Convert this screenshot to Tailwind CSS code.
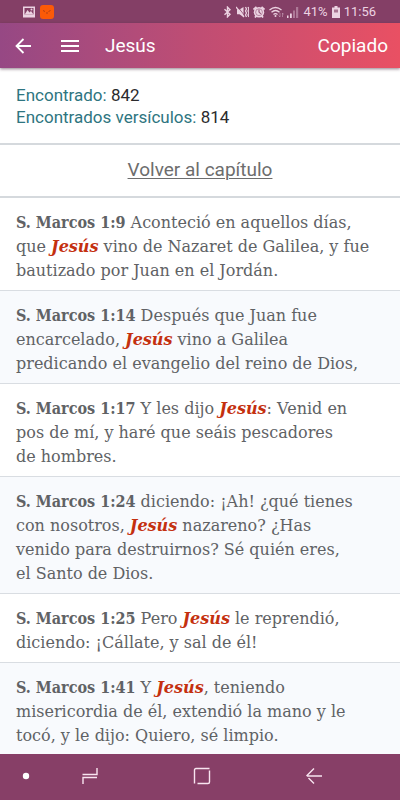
<!DOCTYPE html>
<html lang="es">
<head>
<meta charset="utf-8">
<meta name="viewport" content="width=device-width, initial-scale=1">
<title>Jesús</title>
<script src="https://cdn.jsdelivr.net/npm/@tailwindcss/browser@4"></script>
</head>
<body class="flex h-screen flex-col overflow-hidden bg-white font-[Roboto,sans-serif]">
<div class="flex h-[23px] shrink-0 items-center bg-[#843f66] pr-[24px] pl-[23px] text-[#ecd3e2]">
  <svg class="h-[12px] w-[12px]" viewBox="0 0 12 12" aria-hidden="true"><path fill="currentColor" fill-rule="evenodd" d="M0 0.500h12v11H0zM1.500 2v6.500h9V2z"/><path fill="currentColor" d="M2 8l2.500-4 2 2.500L8 5l2.500 3.500H2z"/><circle cx="8.500" cy="3.500" r="1" fill="currentColor"/></svg>
  <svg class="ml-[5px] h-[14px] w-[14px]" viewBox="0 0 14 14" aria-hidden="true"><rect width="14" height="14" rx="3" fill="#fb5a08"/><path d="M3 5.500l2 1M8.500 6.500l2-1M6 8h2" stroke="#b53f12" fill="none"/></svg>
  <div class="ml-auto flex items-center">
    <svg class="h-[12px] w-[9px]" viewBox="0 0 9 12" fill="none" stroke="currentColor" stroke-width="1.400" aria-hidden="true"><path d="M1.500 3.200l5.500 5L4.500 10.800V1.200L7 3.800l-5.500 5"/></svg>
    <svg class="ml-[4px] h-[12px] w-[13px]" viewBox="0 0 13 12" aria-hidden="true"><path d="M1 3.500h2.500L7.500 1v10L3.500 8.300H1z" fill="currentColor"/><path d="M1.500 0.500l7 9" stroke="#843f66" stroke-width="0.800"/><path d="M0 1l8 10" stroke="currentColor" stroke-width="1.300"/><path d="M9.500 1l1 2-1 2 1 2-1 2 1 2M12 1l1 2-1 2 1 2-1 2 1 2" fill="none" stroke="currentColor" stroke-width="1.300"/></svg>
    <svg class="ml-[4px] h-[12px] w-[12px]" viewBox="0 0 12 12" aria-hidden="true"><path d="M0.500 3.500L3.500 0.800M8.500 0.800l3 2.700M2 11.500l1.500-2M10 11.500l-1.500-2" stroke="currentColor" stroke-width="1.800"/><circle cx="6" cy="6.200" r="5.200" fill="currentColor"/><circle cx="6" cy="6.200" r="3.400" fill="none" stroke="#843f66" stroke-width="0.500"/><path d="M6 3.500v3l2 1" stroke="#843f66" fill="none"/></svg>
    <svg class="ml-[4px] h-[12px] w-[15px]" viewBox="0 0 15 12" fill="none" stroke="currentColor" stroke-width="1.300" aria-hidden="true"><path d="M0.500 4q6-5 12 0M2.500 6.300q4-3.500 8 0M4.500 8.500q2-1.800 4 0"/><circle cx="6.500" cy="10" r="1" fill="currentColor" stroke="none"/><path d="M11 7v4M11 11l-1.500-1.500M13.500 11V7M13.500 7l1.300 1.500" stroke-width="1" opacity=".4"/></svg>
    <svg class="ml-[3px] h-[12px] w-[12px]" viewBox="0 0 12 12" fill="currentColor" aria-hidden="true"><path d="M0 9.500h1.500V12H0zM3 7.500h1.800V12H3z"/><path opacity=".4" d="M6 4.500h2V12H6zM9 1h2.200v11H9z"/></svg>
    <span class="ml-[4px] text-[13px] leading-[16px]">41%</span>
    <svg class="ml-[4px] h-[12px] w-[8px]" viewBox="0 0 8 12" aria-hidden="true"><path d="M2.500 0h3v1.500H8V12H0V1.500h2.500z" fill="currentColor"/><path d="M2 3.500h4v3H2z" fill="#a87491"/></svg>
    <span class="ml-[4px] text-[13px] leading-[16px]">11:56</span>
  </div>
</div>
<header class="z-10 flex h-[45px] shrink-0 items-center bg-linear-to-r from-[#964884] via-[#c04d73] to-[#e95063] pr-[12px] pl-[15px] text-white shadow-[0_1px_3px_rgba(70,40,60,0.6)]">
  <button type="button" aria-label="Atrás" class="h-[18px] w-[17px]"><svg class="h-[18px] w-[17px]" viewBox="0 0 17 18" fill="none" stroke="currentColor" stroke-width="1.800" aria-hidden="true"><path d="M16 9H2M8.500 2L1.500 9l7 7"/></svg></button>
  <button type="button" aria-label="Menú" class="ml-[29px] h-[18px] w-[18px]"><svg class="h-[18px] w-[18px]" viewBox="0 0 18 18" fill="currentColor" aria-hidden="true"><path d="M0 3h18v2H0zM0 8h18v2H0zM0 13h18v2H0z"/></svg></button>
  <h1 class="ml-[26px] text-[19px] leading-[24px]">Jesús</h1>
  <button type="button" class="ml-auto text-[19px] leading-[24px]">Copiado</button>
</header>
<main class="min-h-0 flex-1 overflow-hidden text-[#606265]">
  <section class="border-b-2 border-[#d5d9dd] px-[16px] pt-[16px] pb-[15px] text-[17px] leading-[22px] text-[#2b2b2d]">
    <p><span class="text-[#2e7580]">Encontrado:</span> 842</p>
    <p><span class="text-[#2e7580]">Encontrados versículos:</span> 814</p>
  </section>
  <div class="flex justify-center border-b-2 border-[#d5d9dd] pt-[12px] pb-[14px]">
    <a href="#" class="text-[19px] leading-[25px] text-[#6d6d6d] underline decoration-1 underline-offset-2">Volver al capítulo</a>
  </div>
  <div class="font-['DejaVu_Serif',serif] text-[16px] leading-[24px] whitespace-nowrap">
    <p class="border-b border-[#d9dde2] px-[16px] pt-[13px] pb-[7px]"><b class="font-['DejaVu_Serif_Condensed','DejaVu_Serif',serif] font-bold">S. Marcos 1:9</b> Aconteció en aquellos días,<br>que <b class="text-[#c4300f] italic">Jesús</b> vino de Nazaret de Galilea, y fue<br>bautizado por Juan en el Jordán.</p>
    <p class="border-b border-[#d9dde2] bg-[#f8fafd] px-[16px] pt-[13px] pb-[7px]"><b class="font-['DejaVu_Serif_Condensed','DejaVu_Serif',serif] font-bold">S. Marcos 1:14</b> Después que Juan fue<br>encarcelado, <b class="text-[#c4300f] italic">Jesús</b> vino a Galilea<br>predicando el evangelio del reino de Dios,</p>
    <p class="border-b border-[#d9dde2] px-[16px] pt-[13px] pb-[7px]"><b class="font-['DejaVu_Serif_Condensed','DejaVu_Serif',serif] font-bold">S. Marcos 1:17</b> Y les dijo <b class="text-[#c4300f] italic">Jesús</b>: Venid en<br>pos de mí, y haré que seáis pescadores<br>de hombres.</p>
    <p class="border-b border-[#d9dde2] bg-[#f8fafd] px-[16px] pt-[13px] pb-[7px]"><b class="font-['DejaVu_Serif_Condensed','DejaVu_Serif',serif] font-bold">S. Marcos 1:24</b> diciendo: ¡Ah! ¿qué tienes<br>con nosotros, <b class="text-[#c4300f] italic">Jesús</b> nazareno? ¿Has<br>venido para destruirnos? Sé quién eres,<br>el Santo de Dios.</p>
    <p class="border-b border-[#d9dde2] px-[16px] pt-[13px] pb-[7px]"><b class="font-['DejaVu_Serif_Condensed','DejaVu_Serif',serif] font-bold">S. Marcos 1:25</b> Pero <b class="text-[#c4300f] italic">Jesús</b> le reprendió,<br>diciendo: ¡Cállate, y sal de él!</p>
    <p class="bg-[#f8fafd] px-[16px] pt-[13px] pb-[7px]"><b class="font-['DejaVu_Serif_Condensed','DejaVu_Serif',serif] font-bold">S. Marcos 1:41</b> Y <b class="text-[#c4300f] italic">Jesús</b>, teniendo<br>misericordia de él, extendió la mano y le<br>tocó, y le dijo: Quiero, sé limpio.</p>
  </div>
</main>
<nav class="flex h-[46px] shrink-0 items-center bg-[#873f67] pb-[2px] text-[#f8e4f0]" aria-label="Sistema">
  <button type="button" aria-label="Ocultar barra" class="flex w-[13%] justify-center"><svg class="h-[8px] w-[8px]" viewBox="0 0 8 8" aria-hidden="true"><circle cx="4" cy="4" r="3.200" fill="#fff"/></svg></button>
  <button type="button" aria-label="Recientes" class="flex w-[19%] justify-center"><svg class="h-[18px] w-[18px]" viewBox="0 0 18 18" fill="none" stroke="currentColor" stroke-width="1.400" aria-hidden="true"><path d="M1.500 7.500h14.500V1M16 10.500H2V17"/></svg></button>
  <button type="button" aria-label="Inicio" class="flex w-[37%] justify-center"><svg class="h-[18px] w-[18px]" viewBox="0 0 18 18" fill="none" stroke="currentColor" stroke-width="1.400" aria-hidden="true"><path d="M1.500 16.500V3q0-1.500 1.500-1.500h13.500M16.500 3.500V15q0 1.500-1.500 1.500H4.500"/></svg></button>
  <button type="button" aria-label="Volver" class="flex w-[19%] justify-center"><svg class="h-[18px] w-[18px]" viewBox="0 0 18 18" fill="none" stroke="currentColor" stroke-width="1.400" aria-hidden="true"><path d="M17 9H2M9 1.500L1.500 9M3.500 11L9 16.500"/></svg></button>
</nav>
</body>
</html>
